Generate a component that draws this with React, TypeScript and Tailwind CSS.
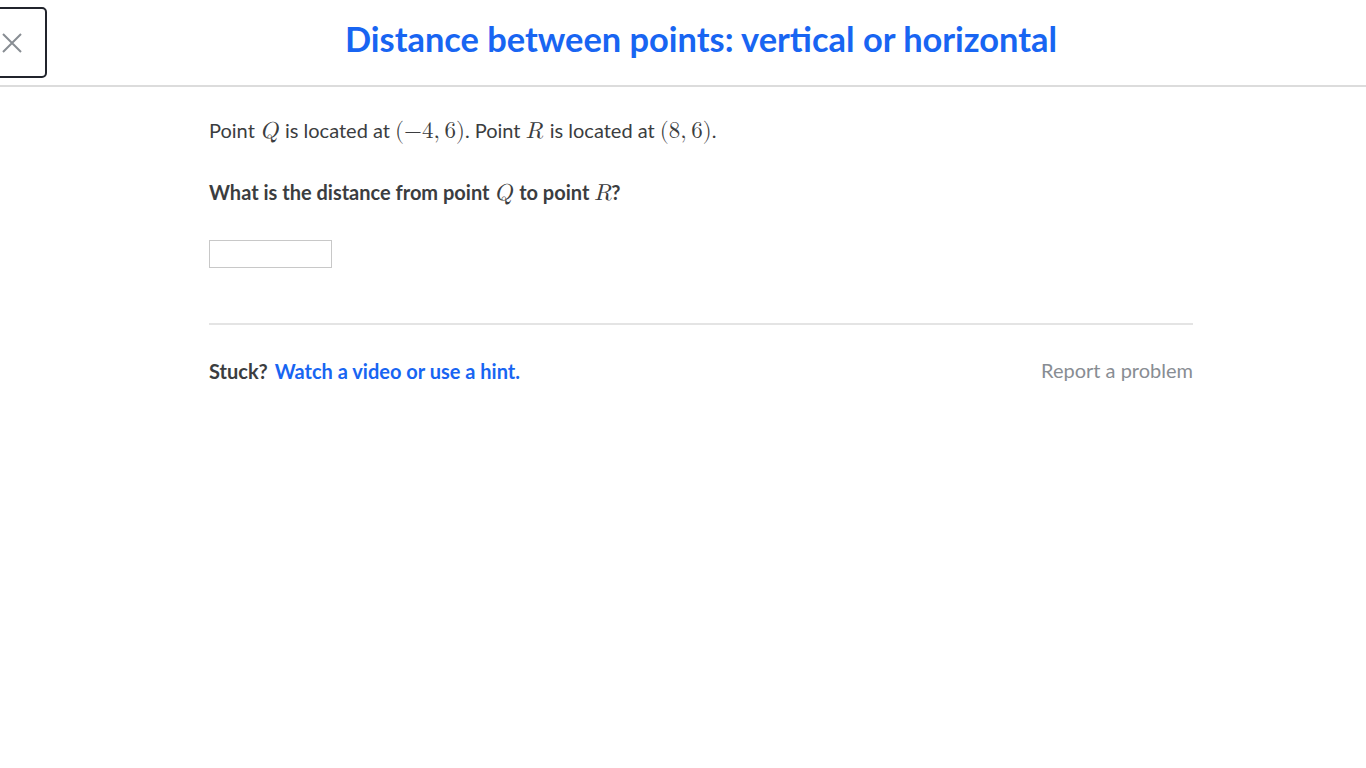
import React from 'react'

const M: React.FC<{ children: React.ReactNode; italic?: boolean }> = ({ children, italic }) => (
  <span className={`font-['Latin_Modern_Math','DejaVu_Serif','Liberation_Serif',serif] text-[23px] leading-none ${italic ? 'italic mr-[2px]' : ''}`}>
    {children}
  </span>
)

export default function App() {
  return (
    <div className="min-h-screen bg-white font-['Lato',sans-serif] text-[#3b3d40]">
      {/* Header */}
      <div className="relative h-[87px] border-b-2 border-[#dcdcdc] flex items-center">
        <button className="absolute left-[-6px] top-[7px] w-[53px] h-[71px] border-2 border-[#21242c] rounded-[5px] flex items-center justify-end pr-[22px] bg-white">
          <svg width="22" height="22" viewBox="0 0 22 22" fill="none" stroke="#888d93" strokeWidth="2">
            <path d="M2 2 L20 20 M20 2 L2 20" />
          </svg>
        </button>
        <div className="flex-1 pl-[36px] pb-[6px] text-center">
          <h1 className="text-[34.4px] font-bold text-[#1865f2] leading-none">
            Distance between points: vertical or horizontal
          </h1>
        </div>
      </div>

      {/* Content */}
      <div className="pl-[36px]">
        <div className="mx-auto w-[984px] pt-[27px]">
          <p className="text-[20px] leading-[32px]">
            Point <M italic>Q</M> is located at <M>(−4,&thinsp;6)</M>. Point <M italic>R</M> is located at <M>(8,&thinsp;6)</M>.
          </p>
          <p className="mt-[30px] text-[20px] leading-[32px] font-bold">
            What is the distance from point <span className="font-normal"><M italic>Q</M></span> to point{' '}
            <span className="font-normal"><M>
              <span className="italic">R</span>
            </M></span>?
          </p>
          <input
            type="text"
            className="mt-[32px] block w-[123px] h-[28px] border border-[#c8c8c8] outline-none"
          />
          <div className="mt-[55px] border-t-2 border-[#e4e4e4]" />
          <div className="mt-[28px] flex items-center justify-between text-[20px]">
            <div className="flex items-center gap-[7px] pt-[3px]">
              <span className="font-bold">Stuck?</span>
              <span className="font-bold text-[#1865f2]">Watch a video or use a hint.</span>
            </div>
            <span className="text-[#888d93]">Report a problem</span>
          </div>
        </div>
      </div>
    </div>
  )
}
